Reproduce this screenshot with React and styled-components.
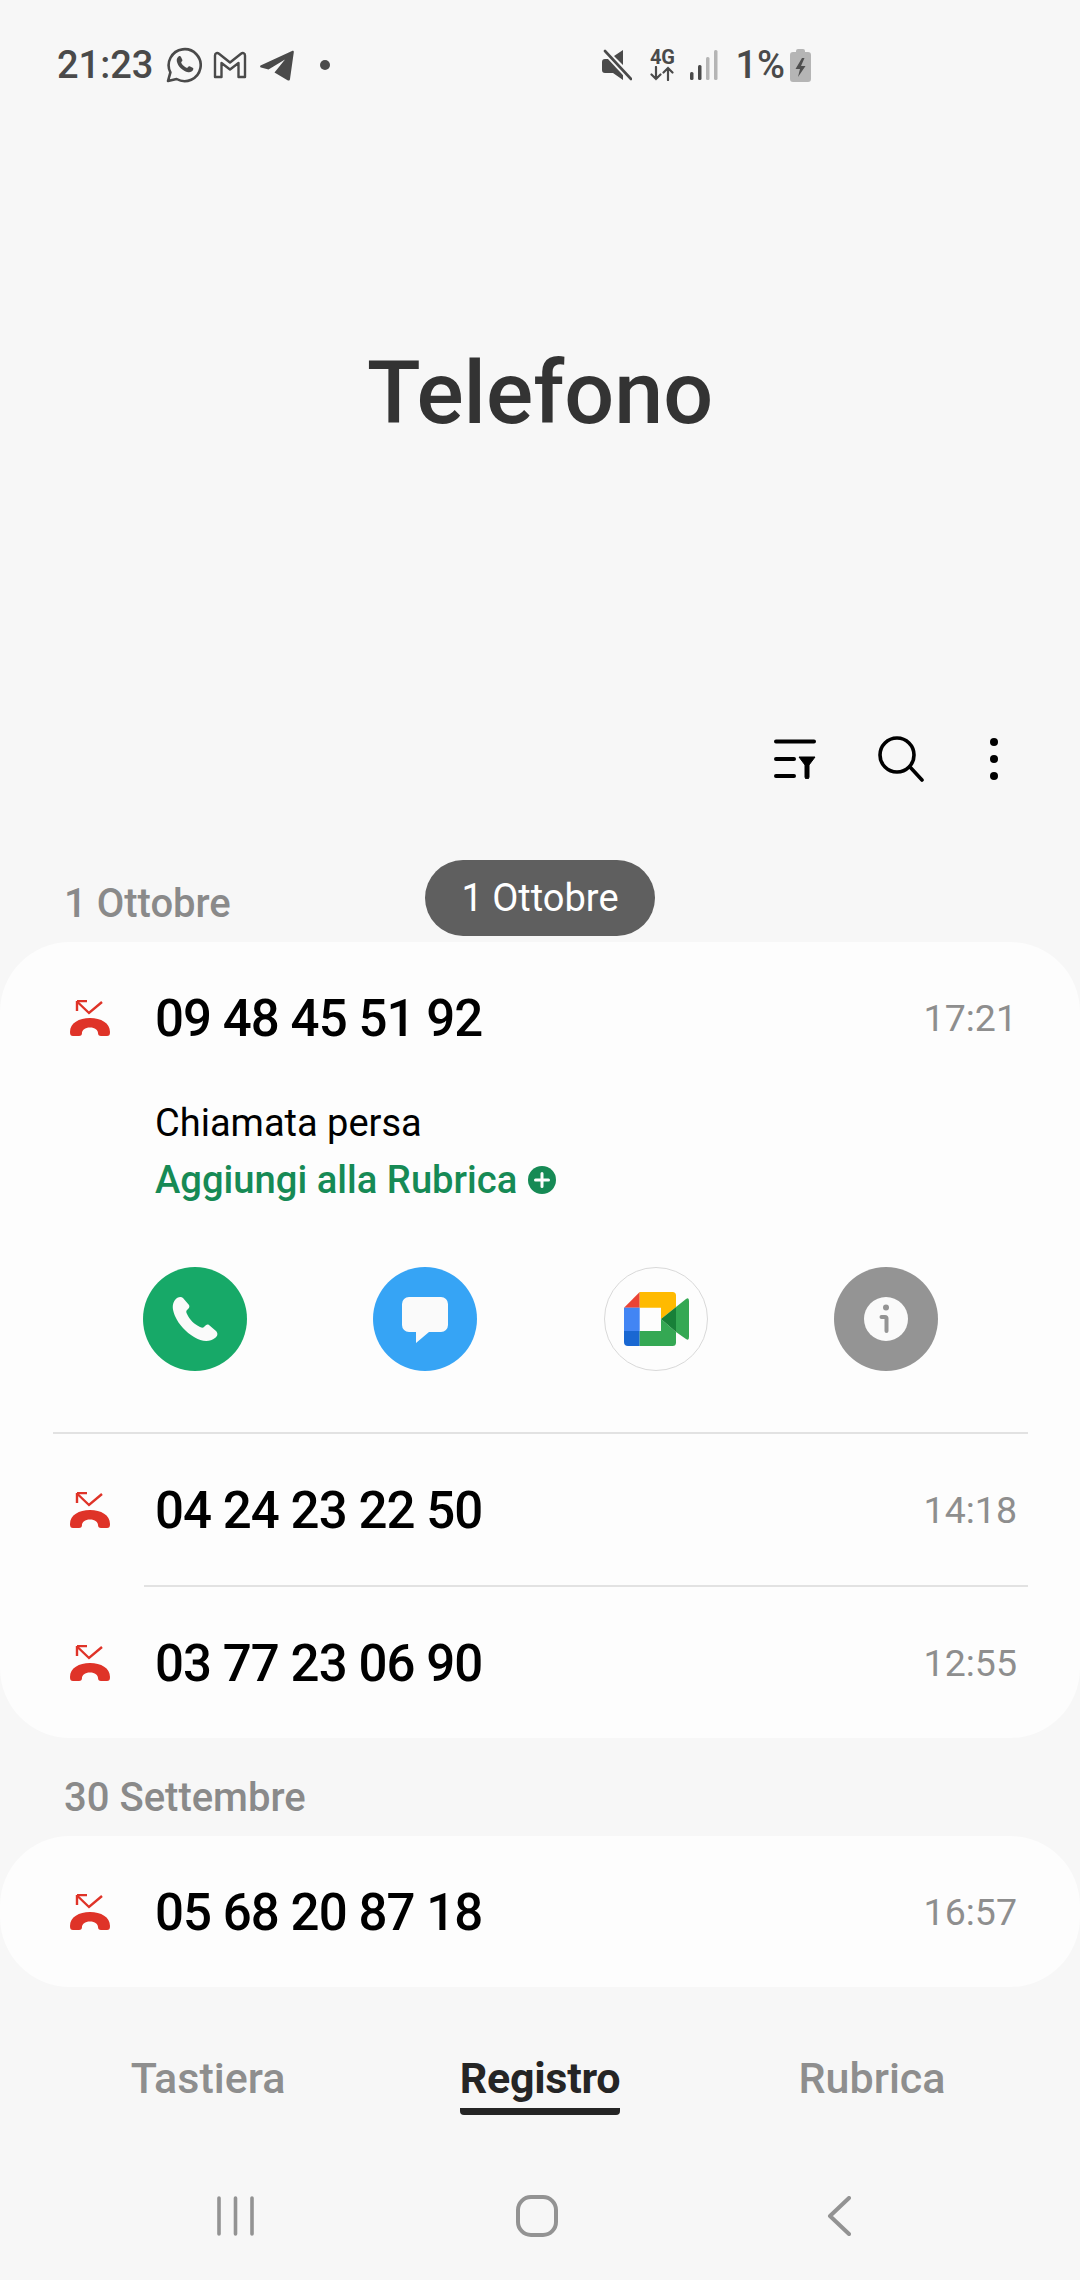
import styled, { createGlobalStyle } from "styled-components";

const GlobalStyle = createGlobalStyle`
    html, body {
        margin: 0;
        padding: 0;
        background: #f7f7f7;
        font-family: Roboto, "Liberation Sans", sans-serif;
    }
`;

const calls = [
    { number: "04 24 23 22 50", time: "14:18" },
    { number: "03 77 23 06 90", time: "12:55" },
];

function App() {
    return (
        <Page>
            <GlobalStyle />
            <StatusBar>
                <StatusGroup>
                    <Clock>21:23</Clock>
                    <WhatsappIcon />
                    <GmailIcon />
                    <TelegramIcon />
                    <NotifDot />
                </StatusGroup>
                <StatusGroup>
                    <MuteIcon />
                    <NetworkIcon />
                    <SignalIcon />
                    <BatteryText>1%</BatteryText>
                    <BatteryIcon />
                </StatusGroup>
            </StatusBar>

            <TitleArea>
                <Title>Telefono</Title>
            </TitleArea>

            <Toolbar>
                <FilterIcon />
                <SearchIcon />
                <DotsIcon />
            </Toolbar>

            <DateHeader>
                1 Ottobre
                <DatePill>1 Ottobre</DatePill>
            </DateHeader>

            <Card>
                <CallRow>
                    <MissedIcon />
                    <CallNumber>09 48 45 51 92</CallNumber>
                    <CallTime>17:21</CallTime>
                </CallRow>
                <Details>
                    <DetailLine>Chiamata persa</DetailLine>
                    <AddLine>
                        Aggiungi alla Rubrica
                        <PlusIcon />
                    </AddLine>
                </Details>
                <Actions>
                    <ActionButton $bg="#17a968"><CallIcon /></ActionButton>
                    <ActionButton $bg="#36a4f5"><MessageIcon /></ActionButton>
                    <ActionButton $bg="#fdfdfd" $border="#d9d9d9"><MeetIcon /></ActionButton>
                    <ActionButton $bg="#949494"><InfoIcon /></ActionButton>
                </Actions>
                <Divider $left={53} />
                <CallRow>
                    <MissedIcon />
                    <CallNumber>{calls[0].number}</CallNumber>
                    <CallTime>{calls[0].time}</CallTime>
                </CallRow>
                <Divider $left={144} />
                <CallRow>
                    <MissedIcon />
                    <CallNumber>{calls[1].number}</CallNumber>
                    <CallTime>{calls[1].time}</CallTime>
                </CallRow>
            </Card>

            <DateHeader $tall>30 Settembre</DateHeader>

            <Card>
                <CallRow>
                    <MissedIcon />
                    <CallNumber>05 68 20 87 18</CallNumber>
                    <CallTime>16:57</CallTime>
                </CallRow>
            </Card>

            <Tabs>
                <Tab>Tastiera</Tab>
                <Tab $active>Registro</Tab>
                <Tab>Rubrica</Tab>
            </Tabs>

            <NavBar>
                <NavSlot><RecentsIcon /></NavSlot>
                <NavSlot><HomeIcon /></NavSlot>
                <NavSlot><BackIcon /></NavSlot>
            </NavBar>
        </Page>
    );
}

/* icons */

function WhatsappIcon() {
    return (
        <WhatsappSvg width="36" height="36" viewBox="0 0 36 36">
            <path d="M2 34l2.4-8.600A16 16 0 1 1 10.600 32z" fill="none" stroke="#4a4a4a" strokeWidth="2.600" strokeLinejoin="round" />
            <path d="M12.500 9.500c1-.8 2-.6 2.500.4l1.300 2.800c.3.700 0 1.300-.6 1.900-.6.600-.6 1-.2 1.700 1.200 2 2.700 3.400 4.800 4.400.6.300 1 .2 1.400-.3.900-1.100 1.300-1.400 2-1.100l2.900 1.400c.8.400.9 1 .6 1.900-.7 2-3 3-5 2.600-5.500-1.100-10.500-6-11.400-11-.3-2 .4-3.500 1.700-4.700z" fill="#4a4a4a" />
        </WhatsappSvg>
    );
}

function GmailIcon() {
    return (
        <GmailSvg width="34" height="28" viewBox="0 0 34 28">
            <path d="M2 26V4.500C2 2 4.500 1.500 6 2.700L17 11.500 28 2.700C29.500 1.500 32 2 32 4.500V26h-6.500V12L17 18.500 8.500 12V26z" fill="none" stroke="#4a4a4a" strokeWidth="2.400" strokeLinejoin="round" />
        </GmailSvg>
    );
}

function TelegramIcon() {
    return (
        <TelegramSvg width="35" height="31" viewBox="0 0 35 31">
            <path d="M1.500 15.500L33 1c1-.4 2 0 1.800 1.300L31 29c-.2 1.500-1.300 2-2.500 1.200L15.500 22.500 26 9.500 9.500 19.500 2 17.500c-1-.3-1.200-1.500-.5-2z" fill="#4a4a4a" />
        </TelegramSvg>
    );
}

function MuteIcon() {
    return (
        <MuteSvg width="30" height="32" viewBox="0 0 30 32">
            <path d="M0 13c0-2 1-3 3-3h5l3 3 10 11v7L11 24H3c-2 0-3-1-3-3zM12 7l9-6v15z" fill="#4a4a4a" />
            <path d="M2 2l26 28" stroke="#f7f7f7" strokeWidth="5" />
            <path d="M3 2l26 28" stroke="#4a4a4a" strokeWidth="2.600" strokeLinecap="round" />
        </MuteSvg>
    );
}

function NetworkIcon() {
    return (
        <NetworkBox>
            <NetworkText>4G</NetworkText>
            <svg width="24" height="15" viewBox="0 0 24 15">
                <path d="M6 1v12M1.500 8.500L6 13l4.500-4.500M18 14V2M13.500 6.500L18 2l4.500 4.500" fill="none" stroke="#4a4a4a" strokeWidth="2.200" strokeLinecap="round" />
            </svg>
        </NetworkBox>
    );
}

function SignalIcon() {
    return (
        <svg width="28" height="30" viewBox="0 0 28 30">
            <rect x="0" y="22" width="3.500" height="8" rx="1.500" fill="#4a4a4a" />
            <rect x="8" y="15" width="3.500" height="15" rx="1.500" fill="#4a4a4a" />
            <rect x="16" y="7" width="3.500" height="23" rx="1.500" fill="#b5b5b5" />
            <rect x="24" y="0" width="3.500" height="30" rx="1.500" fill="#b5b5b5" />
        </svg>
    );
}

function BatteryIcon() {
    return (
        <BatterySvg width="21" height="33" viewBox="0 0 21 33">
            <path d="M6 3V2a2 2 0 0 1 2-2h5a2 2 0 0 1 2 2v1h3a3 3 0 0 1 3 3v24a3 3 0 0 1-3 3H3a3 3 0 0 1-3-3V6a3 3 0 0 1 3-3z" fill="#b5b5b5" />
            <path d="M12 9l-6.500 11h4.500l-2 8 7.500-11h-4.500l3.500-8z" fill="#4f4f4f" />
        </BatterySvg>
    );
}

function FilterIcon() {
    return (
        <svg width="42" height="40" viewBox="0 0 42 40">
            <path d="M2 2.500h38M2 20h18M2 37h18" stroke="#000" strokeWidth="4" strokeLinecap="round" />
            <path d="M25 18h16l-6 8v12a2 2 0 0 1-4 0V26z" fill="#000" stroke="#000" strokeWidth="1" strokeLinejoin="round" />
        </svg>
    );
}

function SearchIcon() {
    return (
        <SearchSvg width="46" height="46" viewBox="0 0 46 46">
            <circle cx="19" cy="19" r="17" fill="none" stroke="#000" strokeWidth="3.600" />
            <path d="M32 31l12 13" stroke="#000" strokeWidth="3.600" strokeLinecap="round" />
        </SearchSvg>
    );
}

function DotsIcon() {
    return (
        <svg width="8" height="42" viewBox="0 0 8 42">
            <circle cx="4" cy="4" r="4" fill="#000" />
            <circle cx="4" cy="21" r="4" fill="#000" />
            <circle cx="4" cy="38" r="4" fill="#000" />
        </svg>
    );
}

function MissedIcon() {
    return (
        <RowIconSvg width="42" height="36" viewBox="0 0 42 36">
            <path d="M8.500 2L20 13 33 2" fill="none" stroke="#df3328" strokeWidth="2.400" />
            <path d="M8 1h10M8 1v10" fill="none" stroke="#df3328" strokeWidth="2.400" />
            <path d="M1 32C1 23 10 18 21 18S41 23 41 32C41 35 40 36 38 36H32C30 36 29 35 29 33 29 30 26 27.500 21 27.500S13 30 13 33C13 35 12 36 10 36H4C2 36 1 35 1 32Z" fill="#df3328" />
        </RowIconSvg>
    );
}

function PlusIcon() {
    return (
        <PlusSvg width="28" height="28" viewBox="0 0 28 28">
            <circle cx="14" cy="14" r="14" fill="#168a55" />
            <path d="M14 7.500v13M7.500 14h13" stroke="#fdfdfd" strokeWidth="3" strokeLinecap="round" />
        </PlusSvg>
    );
}

function CallIcon() {
    return (
        <svg width="46" height="46" viewBox="0 0 46 46">
            <path d="M3 4C5 1 9 0 11 2L17 9C18 11 17 12 15 14 14 15 14 16 15 18 18 24 22 28 28 31 30 32 31 32 32 31 34 29 35 28 37 29L44 35C46 37 46 40 43 42 38 46 30 46 22 41 14 36 7 29 3 20 0 13 0 8 3 4Z" fill="#fafafa" />
        </svg>
    );
}

function MessageIcon() {
    return (
        <MessageSvg width="46" height="46" viewBox="0 0 46 46">
            <path d="M7 0H39a7 7 0 0 1 7 7V28a7 7 0 0 1-7 7H27L14 46V35H7a7 7 0 0 1-7-7V7a7 7 0 0 1 7-7Z" fill="#fafafa" />
        </MessageSvg>
    );
}

function MeetIcon() {
    return (
        <MeetSvg width="66" height="55" viewBox="0 0 66 55">
            <path d="M0 15.700L15.700 0V15.700Z" fill="#ea4335" />
            <path d="M15.700 0H48.500Q52 0 52 3.500V15L37 27V15.700H15.700Z" fill="#ffba00" />
            <rect x="0" y="15.700" width="15.700" height="23.300" fill="#4285f4" />
            <path d="M0 39H15.700V54H4Q0 54 0 50Z" fill="#1967d2" />
            <path d="M15.700 39H37V27L52 40V50.500Q52 54 48.500 54H15.700Z" fill="#34a853" />
            <path d="M37 27L52 15V40Z" fill="#188038" />
            <path d="M52 15L62 7Q65 5 65 9V45Q65 49 62 47L52 40Z" fill="#34a853" />
        </MeetSvg>
    );
}

function InfoIcon() {
    return (
        <svg width="44" height="44" viewBox="0 0 44 44">
            <circle cx="22" cy="22" r="22" fill="#fafafa" />
            <circle cx="22" cy="10.500" r="3" fill="#949494" />
            <path d="M17.500 20h3.500a1.500 1.500 0 0 1 1.500 1.500V34" fill="none" stroke="#949494" strokeWidth="4" strokeLinecap="round" strokeLinejoin="round" />
        </svg>
    );
}

function RecentsIcon() {
    return (
        <svg width="37" height="40" viewBox="0 0 37 40">
            <path d="M2 2v36M18.500 2v36M35 2v36" stroke="#939393" strokeWidth="3.600" strokeLinecap="round" />
        </svg>
    );
}

function HomeIcon() {
    return (
        <svg width="42" height="42" viewBox="0 0 42 42">
            <rect x="2" y="2" width="38" height="38" rx="13" fill="none" stroke="#939393" strokeWidth="4" />
        </svg>
    );
}

function BackIcon() {
    return (
        <svg width="24" height="40" viewBox="0 0 24 40">
            <path d="M22 2L3 20l19 18" fill="none" stroke="#939393" strokeWidth="4" strokeLinecap="round" strokeLinejoin="round" />
        </svg>
    );
}

/* layout */

const Page = styled.div`
    width: 1080px;
    height: 2280px;
    display: flex;
    flex-direction: column;
    background: #f7f7f7;
    overflow: hidden;
`;

const StatusBar = styled.div`
    height: 130px;
    flex: none;
    box-sizing: border-box;
    padding: 0 269px 0 57px;
    display: flex;
    align-items: center;
    justify-content: space-between;
    color: #4a4a4a;
`;

const StatusGroup = styled.div`
    display: flex;
    align-items: center;
    gap: 14px;
`;

const Clock = styled.span`
    font-size: 38px;
    font-weight: 500;
    margin-right: -1px;
`;

const WhatsappSvg = styled.svg`
    flex: none;
`;

const GmailSvg = styled.svg`
    flex: none;
    margin-left: -3px;
`;

const TelegramSvg = styled.svg`
    flex: none;
    margin-left: -2px;
`;

const NotifDot = styled.span`
    width: 10px;
    height: 10px;
    margin-left: 12px;
    border-radius: 50%;
    background: #4a4a4a;
`;

const MuteSvg = styled.svg`
    margin-right: 4px;
`;

const NetworkBox = styled.div`
    width: 24px;
    display: flex;
    flex-direction: column;
    align-items: center;
    margin-right: 2px;
`;

const NetworkText = styled.span`
    font-size: 20px;
    line-height: 17px;
    font-weight: 700;
`;

const BatteryText = styled.span`
    font-size: 38px;
    font-weight: 500;
    margin-left: 3px;
    margin-right: -9px;
`;

const BatterySvg = styled.svg`
    flex: none;
`;

const TitleArea = styled.div`
    height: 524px;
    flex: none;
    display: flex;
    align-items: center;
    justify-content: center;
`;

const Title = styled.h1`
    margin: 0;
    font-size: 88px;
    font-weight: 500;
    color: #333;
`;

const Toolbar = styled.div`
    height: 210px;
    flex: none;
    box-sizing: border-box;
    padding-right: 82px;
    display: flex;
    align-items: center;
    justify-content: flex-end;
    gap: 64px;
`;

const SearchSvg = styled.svg`
    margin: 0 2px 0 -2px;
`;

const DateHeader = styled.div`
    position: relative;
    flex: none;
    height: ${(p) => (p.$tall ? "98px" : "78px")};
    box-sizing: border-box;
    padding: ${(p) => (p.$tall ? "20px" : "0")} 0 0 64px;
    display: flex;
    align-items: center;
    font-size: 40px;
    font-weight: 500;
    color: #8a8a8a;
`;

const DatePill = styled.div`
    position: absolute;
    left: 425px;
    top: -4px;
    width: 230px;
    height: 76px;
    border-radius: 38px;
    background: #5f5f5f;
    display: flex;
    align-items: center;
    justify-content: center;
    color: #fff;
    font-size: 38px;
    font-weight: 400;
`;

const Card = styled.div`
    flex: none;
    background: #fdfdfd;
    border-radius: 70px;
`;

const CallRow = styled.div`
    height: 151px;
    box-sizing: border-box;
    padding: 0 63px 0 69px;
    display: flex;
    align-items: center;
`;

const RowIconSvg = styled.svg`
    flex: none;
    margin-right: 44px;
`;

const CallNumber = styled.span`
    flex: 1;
    margin-top: 1px;
    font-size: 51px;
    letter-spacing: -0.95px;
    font-weight: 500;
    color: #000;
`;

const CallTime = styled.span`
    margin-top: 1px;
    font-size: 37.500px;
    color: #8e8e8e;
`;

const Details = styled.div`
    padding-left: 155px;
    display: flex;
    flex-direction: column;
`;

const DetailLine = styled.div`
    height: 58px;
    line-height: 60px;
    font-size: 38px;
    color: #000;
`;

const AddLine = styled.div`
    height: 58px;
    display: flex;
    align-items: center;
    gap: 11px;
    font-size: 38.200px;
    font-weight: 500;
    color: #168a55;
`;

const PlusSvg = styled.svg`
    flex: none;
`;

const Actions = styled.div`
    margin-top: 58px;
    padding: 0 0 61px 143px;
    display: flex;
    gap: 126.400px;
`;

const ActionButton = styled.div`
    width: 104px;
    height: 104px;
    flex: none;
    box-sizing: border-box;
    border-radius: 50%;
    background: ${(p) => p.$bg};
    border: ${(p) => (p.$border ? `1.500px solid ${p.$border}` : "none")};
    display: flex;
    align-items: center;
    justify-content: center;
`;

const MessageSvg = styled.svg`
    margin-top: 1px;
`;

const MeetSvg = styled.svg`
    margin-left: 2px;
`;

const Divider = styled.div`
    height: 2px;
    margin: 0 52px 0 ${(p) => p.$left}px;
    background: #e2e2e2;
`;

const Tabs = styled.div`
    flex: none;
    margin-top: 63px;
    padding: 0 42px;
    display: grid;
    grid-template-columns: repeat(3, 332px);
    justify-items: center;
`;

const Tab = styled.div`
    height: 65px;
    line-height: 56px;
    box-sizing: border-box;
    font-size: 43px;
    letter-spacing: ${(p) => (p.$active ? "-0.3px" : "0")};
    font-weight: ${(p) => (p.$active ? 700 : 500)};
    color: ${(p) => (p.$active ? "#252525" : "#8e8e8e")};
    border-bottom: 7px solid ${(p) => (p.$active ? "#252525" : "transparent")};
    border-radius: 4px;
`;

const NavBar = styled.div`
    flex: none;
    margin-top: 80px;
    padding-left: 84px;
    display: grid;
    grid-template-columns: repeat(3, 302px);
    justify-items: center;
    align-items: center;
`;

const NavSlot = styled.div`
    height: 42px;
    display: flex;
    align-items: center;
`;

export default App;
